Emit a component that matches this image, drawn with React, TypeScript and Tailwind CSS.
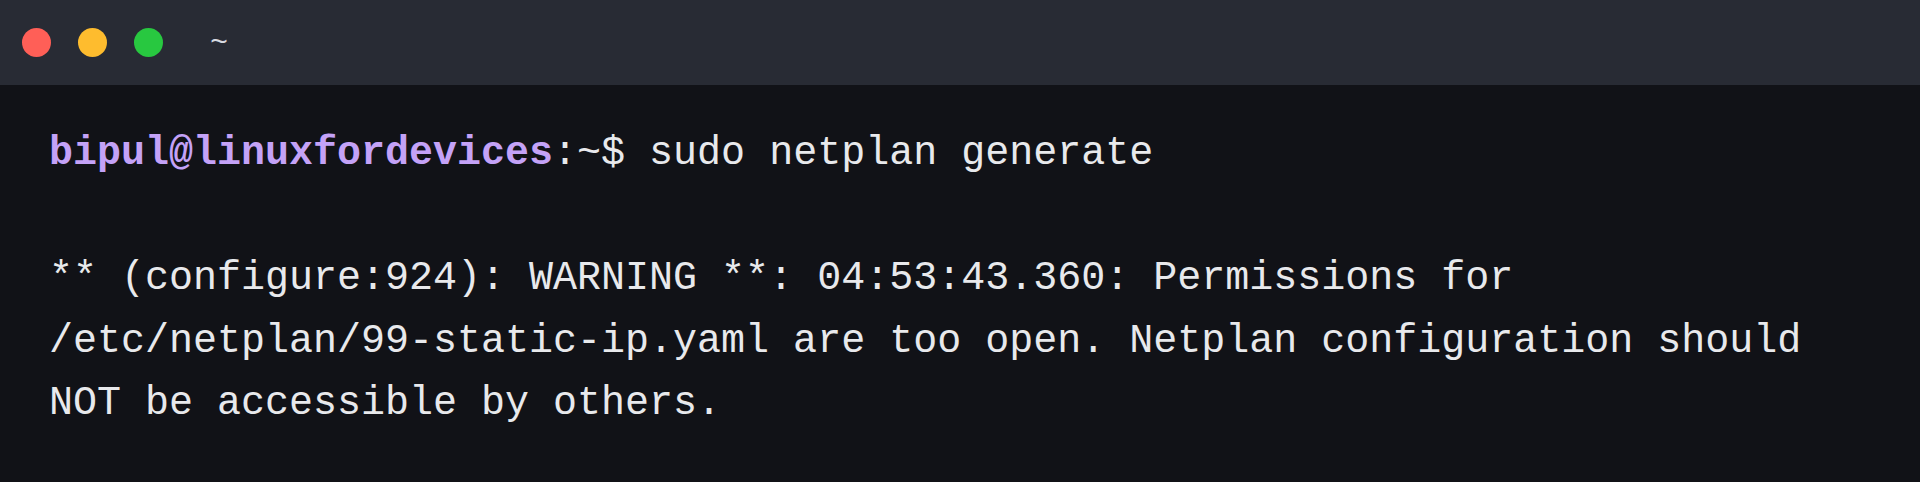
import React from 'react';

const mono = { fontFamily: '"Liberation Mono", "DejaVu Sans Mono", monospace' };

const Dot = ({ color }: { color: string }) => (
  <span className={`block w-[29px] h-[29px] rounded-full ${color}`} />
);

const App: React.FC = () => {
  return (
    <div className="w-[1920px] h-[482px] bg-[#111217] flex flex-col overflow-hidden">
      {/* title bar */}
      <div className="h-[85px] bg-[#282b34] flex items-center pl-[22px]">
        <div className="flex items-center gap-[27px]">
          <Dot color="bg-[#ff5f57]" />
          <Dot color="bg-[#febc2e]" />
          <Dot color="bg-[#28c840]" />
        </div>
        <span className="ml-[47px] text-[30px] text-[#d8dae0] leading-none" style={mono}>
          ~
        </span>
      </div>

      {/* terminal body */}
      <div className="pl-[49px] pt-[38px] text-[40px] leading-[62.5px] text-[#e8e9ec] whitespace-pre" style={mono}>
        <div>
          <span className="text-[#c4a2f7] font-bold">bipul@linuxfordevices</span>
          <span>:~$ sudo netplan generate</span>
        </div>
        <div>&nbsp;</div>
        <div>** (configure:924): WARNING **: 04:53:43.360: Permissions for</div>
        <div>/etc/netplan/99-static-ip.yaml are too open. Netplan configuration should</div>
        <div>NOT be accessible by others.</div>
      </div>
    </div>
  );
};

export default App;
